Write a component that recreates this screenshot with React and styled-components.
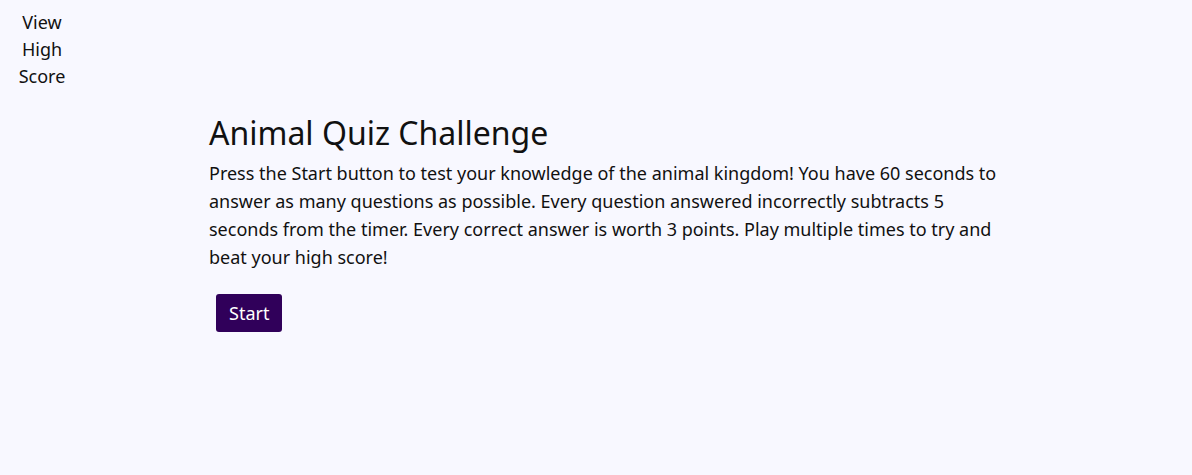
import styled, { createGlobalStyle } from "styled-components";

const GlobalStyle = createGlobalStyle`
  body {
    margin: 0;
    background: #f8f8ff;
    font-family: "Noto Sans", Lato, sans-serif;
    color: #111;
  }
`;

const Page = styled.div`
  display: flex;
  align-items: flex-start;
`;

const Nav = styled.nav`
  flex: 0 0 84px;
  padding-top: 9px;
  display: flex;
  justify-content: center;
`;

const HighScoreLink = styled.a`
  width: 56px;
  text-align: center;
  font-size: 18px;
  line-height: 27px;
  color: #111;
  text-decoration: none;
  cursor: pointer;
`;

const Main = styled.main`
  padding: 113px 0 0 125px;
  width: 800px;
`;

const Title = styled.h1`
  margin: 0 0 6px 0;
  font-size: 32px;
  font-weight: 400;
  line-height: 40px;
`;

const Intro = styled.p`
  margin: 0;
  font-size: 18px;
  line-height: 28px;
`;

const StartButton = styled.button`
  margin: 23px 0 0 7px;
  padding: 6px 13px;
  border: none;
  border-radius: 3px;
  background: #30005a;
  color: #fff;
  font-family: inherit;
  font-size: 18px;
  line-height: 26px;
  cursor: pointer;
`;

export default function App() {
  return (
    <>
      <GlobalStyle />
      <Page>
        <Nav>
          <HighScoreLink>View High Score</HighScoreLink>
        </Nav>
        <Main>
          <Title>Animal Quiz Challenge</Title>
          <Intro>
            Press the Start button to test your knowledge of the animal kingdom! You have 60 seconds to
            answer as many questions as possible. Every question answered incorrectly subtracts 5
            seconds from the timer. Every correct answer is worth 3 points. Play multiple times to try and
            beat your high score!
          </Intro>
          <StartButton>Start</StartButton>
        </Main>
      </Page>
    </>
  );
}
